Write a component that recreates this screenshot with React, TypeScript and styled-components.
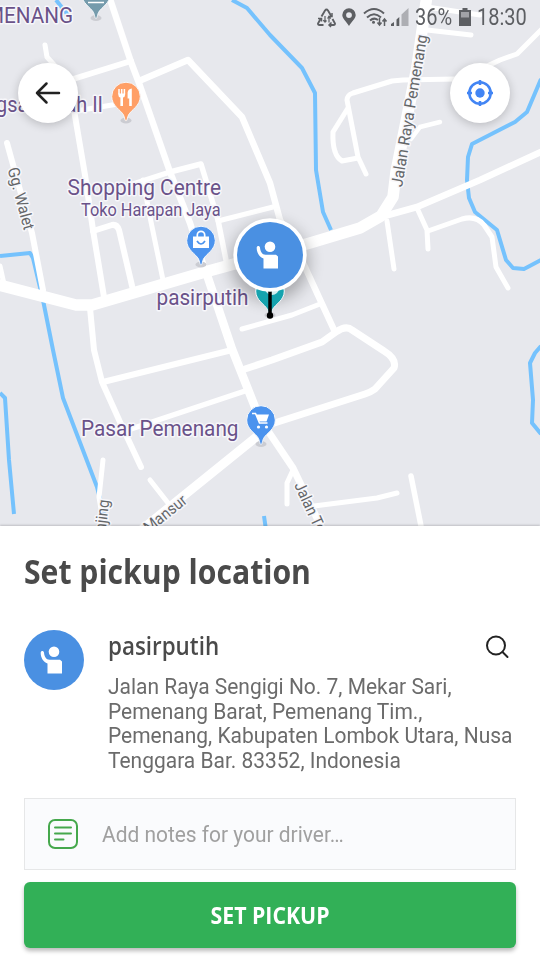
import React from "react";
import styled, { createGlobalStyle } from "styled-components";

const GlobalStyle = createGlobalStyle`
  * { box-sizing: border-box; }
  body { margin: 0; background: #fff; font-family: Roboto, sans-serif; }
`;

const Screen = styled.main`
  width: 540px;
  height: 960px;
  display: flex;
  flex-direction: column;
  overflow: hidden;
  background: #fff;
`;

const MapArea = styled.section`
  position: relative;
  flex: 0 0 526px;
  background: #e7e8ed;
`;

const MapCanvas = styled.svg`
  display: block;
  width: 540px;
  height: 526px;
`;

const StatusBar = styled.header`
  position: absolute;
  top: 0;
  right: 13px;
  height: 36px;
  display: flex;
  align-items: center;
  color: #5d5f63;
`;

const StatusText = styled.span<{ $width: number }>`
  width: ${(p) => p.$width}px;
  font-size: 23px;
  line-height: 36px;
  white-space: nowrap;
  transform: scaleX(0.87);
  transform-origin: left center;
`;

const StatusIcons = styled.svg`
  display: block;
  width: 99px;
  height: 36px;
`;

const Battery = styled.svg`
  display: block;
  width: 12px;
  height: 36px;
  margin: 0 6px 0 5px;
`;

const RoundButton = styled.button<{ $side: "left" | "right" }>`
  position: absolute;
  top: 63px;
  ${(p) => (p.$side === "left" ? "left: 18px;" : "right: 30px;")}
  width: 60px;
  height: 60px;
  padding: 0;
  border: 0;
  border-radius: 50%;
  background: #fff;
  box-shadow: 0 2px 10px rgba(0, 0, 0, 0.2);
  display: grid;
  place-items: center;
`;

const Panel = styled.section`
  position: relative;
  flex: 1;
  display: flex;
  flex-direction: column;
  padding: 25px 24px 0;
  background: #fff;
  box-shadow: 0 -1px 2px rgba(0, 0, 0, 0.18);
`;

const Title = styled.h1`
  margin: 0;
  height: 42px;
  font: 700 33.5px/40px "Open Sans", "Noto Sans", sans-serif;
  color: #4a4a4a;
  white-space: nowrap;
  transform: scaleX(0.9);
  transform-origin: left center;
`;

const PlaceRow = styled.div`
  display: flex;
  margin-top: 37px;
  height: 168px;
`;

const Avatar = styled.div`
  flex: 0 0 60px;
  height: 60px;
  border-radius: 50%;
  background: #4a90e2;
`;

const PlaceText = styled.div`
  flex: 1;
  margin-left: 24px;
`;

const PlaceHead = styled.div`
  display: flex;
  justify-content: space-between;
  align-items: center;
  height: 32px;
  padding-right: 7px;
`;

const PlaceName = styled.h2`
  margin: 0;
  font: 600 24.5px/30px "Open Sans", "Noto Sans", sans-serif;
  color: #4a4a4a;
  transform: scaleX(0.913);
  transform-origin: left center;
`;

const SearchIcon = styled.svg`
  width: 24px;
  height: 24px;
  margin-top: 2px;
`;

const Address = styled.p`
  margin: 13px 0 0;
  font-size: 22px;
  line-height: 24.7px;
  color: #6b6b6b;
  white-space: nowrap;
  transform: scaleX(0.953);
  transform-origin: left center;
  width: 404px;
`;

const Notes = styled.div`
  display: flex;
  align-items: center;
  height: 72px;
  padding-left: 23px;
  border: 1px solid #e6e7e8;
  background: #fafbfd;
`;

const NotesHint = styled.span`
  margin-left: 24px;
  font-size: 22px;
  line-height: 30px;
  padding-top: 2px;
  color: #a0a0a0;
  transform: scaleX(0.951);
  transform-origin: left center;
`;

const PickupButton = styled.button`
  margin-top: 12px;
  height: 66px;
  border: 0;
  border-radius: 6px;
  background: #32b057;
  box-shadow: 0 3px 4px rgba(0, 0, 0, 0.27);
  color: #fff;
  padding: 0;
`;

const PickupLabel = styled.span`
  display: block;
  font: 700 23px/64px "Open Sans", "Noto Sans", sans-serif;
  transform: scaleX(0.925);
`;

const water = [
  "M56 0L68 15",
  "M232 0L247 8L270 35L302 68L315 93L316 170L323 212L331 230",
  "M541 79L527 112L515 122L472 144L468 157L467 180L469 198L475 212L497 230L506 260L513 268L524 269L541 260",
  "M541 346L535 353L530 363L533 400L532 423L541 434",
  "M0 256L30 253L33 258L43 300L53 350L63 398L97 487L108 530",
  "M0 393L5 398L9 460L14 514",
  "M264 516L266 530",
];

const roads: { w: number; d: string }[] = [
  { w: 11.5, d: "M-5 284L76 305L92 305L205 272L310 243L360 228L381 216L393 197L396 172L417 67L427 -5" },
  { w: 6.5, d: "M381 217L417 207L480 180L545 150" },
  { w: 5, d: "M45 45L47 57L56 67" },
  { w: 6, d: "M70 80L131 61" },
  { w: 6.5, d: "M109 -4L131 62L139 83L170 172L190 223L205 270" },
  { w: 8.5, d: "M206 272L232 349L255 407L262 425" },
  { w: 6.5, d: "M139 81L188 60L242 117L270 183L280 220L305 267L335 332" },
  { w: 5, d: "M76 111L118 104" },
  { w: 6, d: "M74 110L85 175L93 230L104 297" },
  { w: 5.5, d: "M130 185L170 172L201 164L208 187L218 220L227 265" },
  { w: 5, d: "M218 221L273 207" },
  { w: 6, d: "M93 231L112 225Q117 224 119 230L133 290" },
  { w: 5, d: "M143 180L150 217L163 280" },
  { w: 6, d: "M7 143L20 190L32 233L43 290" },
  { w: 5, d: "M0 266L4 284" },
  { w: 6, d: "M90 308L94 350L102 382L120 422L141 467" },
  { w: 5, d: "M150 480L168 503" },
  { w: 6, d: "M103 382L232 350" },
  { w: 5.5, d: "M125 431L245 391" },
  { w: 7, d: "M245 369L272 360L322 342L336 332Q346 325 352 330L384 351Q397 359 394 368L375 389Q371 392 365 394L262 427" },
  { w: 5, d: "M242 329L292 315L320 304" },
  { w: 9, d: "M260 434L140 531" },
  { w: 5, d: "M103 460L99 497L101 509" },
  { w: 7, d: "M264 425L293 468L325 535" },
  { w: 5, d: "M293 470L287 483L287 504" },
  { w: 5, d: "M314 506L377 498L397 493" },
  { w: 5.5, d: "M411 476L422 531" },
  { w: 5, d: "M387 221L394 269" },
  { w: 5, d: "M417 208L427 230L428 249" },
  { w: 5, d: "M428 231L462 219Q476 215 484 225L492 237L496 267L508 288" },
  { w: 5, d: "M427 7L480 15" },
  { w: 5, d: "M427 30L471 35" },
  { w: 5, d: "M455 79L403 80L392 81L353 93Q347 95 347 100L358 157L366 174" },
  { w: 5, d: "M348 108L333 132Q332 155 342 161L358 158" },
  { w: 4.5, d: "M411 139L420 127L440 122" },
  { w: 5, d: "M485 67L500 60L517 54L543 28" },
];

type LabelProps = {
  x: number;
  y: number;
  size: number;
  text: string;
  length?: number;
  street?: boolean;
  turn?: number;
};

const MapLabel = ({ x, y, size, text, length, street, turn = 0 }: LabelProps) => (
  <text
    transform={`translate(${x} ${y}) rotate(${turn})`}
    fontFamily="Roboto, sans-serif"
    fontSize={size}
    fill={street ? "#65676a" : "#6a5289"}
    stroke="#f7f7fb"
    strokeWidth={3}
    strokeLinejoin="round"
    paintOrder="stroke"
    textLength={length}
    lengthAdjust="spacingAndGlyphs"
  >
    {text}
  </text>
);

const MapPin = ({ x, y, color, children }: { x: number; y: number; color: string; children?: React.ReactNode }) => (
  <g transform={`translate(${x} ${y})`}>
    <ellipse cx="0" cy="24" rx="5.5" ry="3" fill="#cbccd2" />
    <path
      d="M0 24.5C-1.2 24.5-1.3 21-2.5 18.500C-5 13.500-14.300 9.500-14.300 0A14.300 14.300 0 0 1 14.300 0C14.300 9.500 5 13.500 2.500 18.500C1.300 21 1.200 24.500 0 24.500Z"
      fill={color}
      stroke="#f6f8fb"
      strokeWidth="1"
    />
    {children}
  </g>
);

const WavingPerson = () => (
  <g fill="#fff">
    <circle cx="0" cy="-8.300" r="5.300" />
    <path d="M-6.500 13.500V3.500C-11 2-13.500-3-13.300-7.500C-13.200-9.600-10.200-9.600-10-7.500C-9.700-3.500-8-.3-4.500-.3H6L8 1.500V13.500Z" />
  </g>
);

const PickupMap = () => (
  <MapCanvas viewBox="0 0 540 526">
    <defs>
      <filter id="markerShadow" x="-50%" y="-50%" width="200%" height="200%">
        <feGaussianBlur stdDeviation="8" />
      </filter>
    </defs>
    <g fill="none" stroke="#75c2fd" strokeWidth="4" strokeLinejoin="round">
      {water.map((d) => (
        <path key={d} d={d} />
      ))}
    </g>
    <g fill="none" stroke="#fff" strokeLinecap="round" strokeLinejoin="round">
      {roads.map((r) => (
        <path key={r.d} d={r.d} strokeWidth={r.w} />
      ))}
    </g>

    <MapLabel x={-14} y={22.500} size={22} text="MENANG" length={87} />
    <MapLabel x={-4} y={112} size={22} text="gsal Indah II" length={107} />
    <MapLabel x={67.500} y={195} size={22} text="Shopping Centre" length={153.500} />
    <MapLabel x={81} y={216} size={18} text="Toko Harapan Jaya" length={139.500} />
    <MapLabel x={156.500} y={304.500} size={22} text="pasirputih" length={92} />
    <MapLabel x={81} y={435.500} size={22} text="Pasar Pemenang" length={157.500} />
    <MapLabel x={7.500} y={169} size={16} text="Gg. Walet" length={64} turn={75} street />
    <MapLabel x={402} y={187.500} size={16} text="Jalan Raya Pemenang" length={154} turn={-80.500} street />
    <MapLabel x={149} y={533.500} size={16} text="Mansur" length={50} turn={-38.500} street />
    <MapLabel x={294} y={485} size={16} text="Jalan Tem" length={66} turn={65} street />
    <MapLabel x={104.500} y={540} size={16} text="anjing" length={40} turn={-83} street />

    <MapPin x={96} y={-6} color="#759bac">
      <path d="M-8 1H8M-8 8.500H8" stroke="#fff" strokeWidth="1.500" />
    </MapPin>
    <MapPin x={126} y={96.500} color="#ff9f66">
      <path d="M-7-7.500V-2.500M-4.300-7.500V-2.500M-1.600-7.500V-2.500" fill="none" stroke="#fff" strokeWidth="1.500" />
      <path d="M-7.750-3H-.85V-2Q-.9 .5-3 1V9.500H-5.600V1Q-7.700.5-7.750-2ZM5.800-8V9.500H3.200V2H1.600V-4Q2-7.500 5.800-8Z" fill="#fff" />
    </MapPin>
    <MapPin x={201} y={240.500} color="#4b93ee">
      <path d="M-8-4H8V7.500H-8Z" fill="#fff" />
      <path d="M-3.700-3V-5.500A3.700 3.700 0 0 1 3.700-5.500V-3" fill="none" stroke="#fff" strokeWidth="1.700" />
      <path d="M-4 .5Q0 6.500 4 .5" fill="none" stroke="#4b93ee" strokeWidth="1.700" />
    </MapPin>
    <MapPin x={261} y={420} color="#4b93ee">
      <path d="M-9-6.500H-5.500L-1.500 3H6.500" fill="none" stroke="#fff" strokeWidth="1.500" />
      <path d="M-5-5.500H8L5.500 1.500H-2Z" fill="#fff" />
      <circle cx="-2.500" cy="7" r="1.600" fill="#fff" />
      <circle cx="5.500" cy="7" r="1.600" fill="#fff" />
    </MapPin>

    <circle cx="270" cy="262" r="39" fill="#000" opacity=".28" filter="url(#markerShadow)" />
    <MapPin x={270} y={291} color="#15a3ae">
      <circle cx="2" cy="-3" r="7" fill="#d5eef0" />
    </MapPin>
    <path d="M270 288V315" stroke="#000" strokeWidth="3.500" />
    <circle cx="270" cy="315.500" r="3.200" fill="#000" />
    <circle cx="270" cy="255" r="36.700" fill="#fff" />
    <circle cx="270" cy="255" r="33" fill="#4a90e2" />
    <g transform="translate(270 255)">
      <WavingPerson />
    </g>
  </MapCanvas>
);

const App = () => (
  <>
    <GlobalStyle />
    <Screen>
      <MapArea>
        <PickupMap />
        <StatusBar>
          <StatusIcons viewBox="316 0 99 36" fill="none" stroke="#5d5f63">
            <path d="M321.500 16.500L325 10.500Q326.500 8.500 328 10.500L331.500 16.500M320.500 19L318 23.500Q317.800 25 319.500 25H323.500M332.500 19L335 23.500Q335.200 25 333.500 25H329.500" strokeWidth="1.900" />
            <path d="M332 13V16.500H328.500M318 18.500H321.500V21.500M331.500 22.500L329 25L331 27" strokeWidth="1.500" />
            <path d="M325 16V22M323.200 20.200L325 22.200L326.500 20.500M329 22.500V16.500M327.500 18.500L329 16.500L330.800 18.500" strokeWidth="1.200" />
            <path d="M349 26C346 21 342.300 18.500 342.300 15A6.700 6.700 0 0 1 355.700 15C355.700 18.500 352 21 349 26ZM349 12.200A2.900 2.900 0 1 0 349 18A2.900 2.900 0 1 0 349 12.200Z" fill="#5d5f63" fillRule="evenodd" stroke="none" />
            <path d="M364 13.500Q374 4.500 384 13.500M367 17.500Q374 11 381 17.500M370 20.500Q374 17 378 20" strokeWidth="2" />
            <circle cx="373.500" cy="22.300" r="1.500" fill="#5d5f63" stroke="none" />
            <path d="M379.500 18V25M377.500 22.500L379.500 25L381.500 22.500M384.500 26V19M382.500 21.500L384.500 19L386.500 21.500" strokeWidth="1.500" />
            <path d="M391 26V24L394 22V26ZM396.500 26V19.500L399.300 17V26Z" fill="#5d5f63" stroke="none" />
            <path d="M401.500 26V14.500L408.500 8V26Z" fill="#adaeb3" stroke="none" />
          </StatusIcons>
          <StatusText $width={39}>36%</StatusText>
          <Battery viewBox="0 0 12 36">
            <path d="M3.500 8H8.500V10H12V26H0V10H3.500Z" fill="#5d5f63" />
            <path d="M2 12H10V17.500H2Z" fill="#a2a3a7" />
          </Battery>
          <StatusText $width={50}>18:30</StatusText>
        </StatusBar>
        <RoundButton $side="left" aria-label="Back">
          <svg width="60" height="60" fill="none" stroke="#222" strokeWidth="2.500" strokeLinecap="round" strokeLinejoin="round">
            <path d="M41 30H19M28.500 20.500L19 30L28.500 39.500" />
          </svg>
        </RoundButton>
        <RoundButton $side="right" aria-label="My location">
          <svg width="60" height="60" fill="none" stroke="#4285f4">
            <circle cx="30" cy="30" r="10.700" strokeWidth="2.600" />
            <circle cx="30" cy="30" r="4.700" fill="#4285f4" stroke="none" />
            <path d="M30 17V22M30 38V43M17 30H22M38 30H43" strokeWidth="2.500" />
          </svg>
        </RoundButton>
      </MapArea>
      <Panel>
        <Title>Set pickup location</Title>
        <PlaceRow>
          <Avatar>
            <svg width="60" height="60" viewBox="-30 -30 60 60">
              <WavingPerson />
            </svg>
          </Avatar>
          <PlaceText>
            <PlaceHead>
              <PlaceName>pasirputih</PlaceName>
              <SearchIcon viewBox="0 0 24 24" fill="none" stroke="#222" strokeWidth="2" strokeLinecap="round">
                <circle cx="11" cy="10.500" r="9" />
                <path d="M17.500 17L22.500 22" />
              </SearchIcon>
            </PlaceHead>
            <Address>
              Jalan Raya Sengigi No. 7, Mekar Sari,
              <br />
              Pemenang Barat, Pemenang Tim.,
              <br />
              Pemenang, Kabupaten Lombok Utara, Nusa
              <br />
              Tenggara Bar. 83352, Indonesia
            </Address>
          </PlaceText>
        </PlaceRow>
        <Notes>
          <svg width="30" height="30" fill="none" stroke="#45a84c" strokeWidth="2" strokeLinecap="round">
            <rect x="1" y="1" width="28" height="28" rx="6" />
            <path d="M7 8.500H23M7 14.500H23M7 20.500H15.500" />
          </svg>
          <NotesHint>Add notes for your driver…</NotesHint>
        </Notes>
        <PickupButton>
          <PickupLabel>SET PICKUP</PickupLabel>
        </PickupButton>
      </Panel>
    </Screen>
  </>
);

export default App;
